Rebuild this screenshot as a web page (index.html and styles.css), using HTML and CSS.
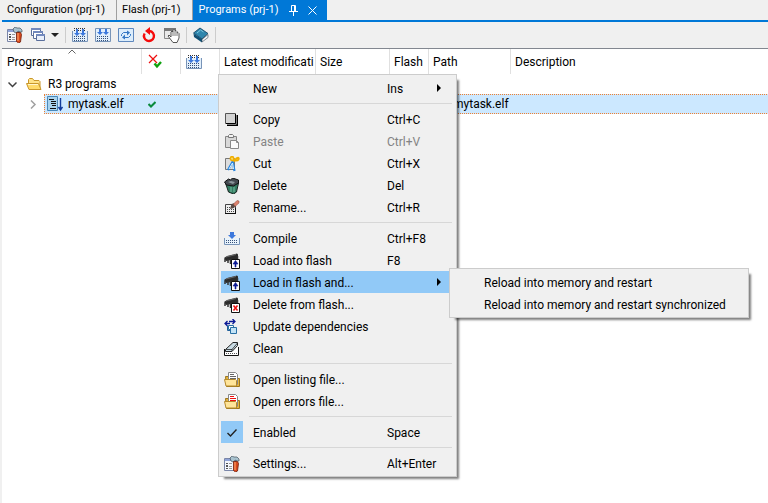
FILE: index.html
```html
<!DOCTYPE html>
<html lang="en">
<head>
  <meta charset="UTF-8" />
  <meta name="viewport" content="width=device-width, initial-scale=1.0"/>
  <title>Programs (prj-1)</title>
  <link rel="stylesheet" href="styles.css">
</head>
<body>

<!-- icon set -->
<svg class="defs" aria-hidden="true">
  <symbol id="i-settings" viewBox="0 0 16 16">
    <path d="M.5 2.500h11v12H.5z" fill="#f4f6fb" stroke="#7a86a8"/>
    <path d="M1 3h10v2H1z" fill="#8fa3d8"/>
    <path d="M2 7h2v1H2zM2 9h2v2H2zM2 12h2v1H2z" fill="#555"/>
    <path d="M5 7h3v1H5zM5 10h3v1H5zM5 12h3v1H5z" fill="#999"/>
    <path d="M6 2l2-2 2 1h3l2 2v2h-2l-1-1-2 1-1 1-2-1z" fill="#a9c3cf" stroke="#44505c" stroke-width=".7"/>
    <path d="M9.500 5.500h4l1 2-1 7.500-2 1-2-1.500z" fill="#d8481c" stroke="#6e1c08" stroke-width=".8"/>
    <path d="M11 6v8" stroke="#ffab70"/>
  </symbol>
  <symbol id="i-windows" viewBox="0 0 16 16">
    <path d="M1.500 1.500h9v7h-9z" fill="#fff" stroke="#5a6f9c"/><path d="M1 1h10v2H1z" fill="#7289bd"/>
    <path d="M3.500 4.500h9v7h-9z" fill="#fff" stroke="#5a6f9c"/><path d="M3 4h10v2H3z" fill="#7289bd"/>
    <path d="M6.500 7.500h8v6h-8z" fill="#e9effa" stroke="#5a6f9c"/><path d="M6 7h9v2H6z" fill="#7289bd"/>
  </symbol>
  <symbol id="i-build" viewBox="0 0 16 16">
    <path d="M.5 4v10.500h15V4" fill="#e2effb" stroke="#7894b8"/>
    <path d="M2 1.500h12M2 3.500h12" stroke="#333" stroke-dasharray="1 1"/>
    <path d="M4 2h2v4h2L5 9 2 6h2zM10 2h2v4h2l-3 3-3-3h2z" fill="#3c78dc"/>
    <path d="M2 9.500h12M2 11.500h12M2 13.500h12" stroke="#35507a" stroke-dasharray="1 1"/>
  </symbol>
  <symbol id="i-build-one" viewBox="0 0 16 16">
    <path d="M.5 1.500h15v13H.5z" fill="#e2effb" stroke="#7894b8"/>
    <path d="M4 2h2v3h2L5 8 2 5h2zM10 2h2v3h2l-3 3-3-3h2z" fill="#3c78dc"/>
    <path d="M2 9.500h12M2 11.500h12M2 13.500h12" stroke="#35507a" stroke-dasharray="1 1"/>
  </symbol>
  <symbol id="i-sync" viewBox="0 0 16 16">
    <path d="M.5 1.500h15v13H.5z" fill="#dcedfb" stroke="#5f88bd"/>
    <path d="M3.500 9V7.500l2-2H10M12.500 7v1.500l-2 2H6" fill="none" stroke="#3377c4"/>
    <path d="M9 3.500l3 2-3 3zM7 7.500l-3 3 3 2z" fill="#3377c4"/>
  </symbol>
  <symbol id="i-restart" viewBox="0 0 16 16">
    <path d="M3.600 6.500A5 5 0 1 0 8.500 4" fill="none" stroke="#f50a0a" stroke-width="2.400"/>
    <path d="M4 4l5-4v8z" fill="#f50a0a"/>
  </symbol>
  <symbol id="i-hand" viewBox="0 0 16 16">
    <path d="M.5 1.500h11v10H.5z" fill="#e9e9e9" stroke="#888"/><path d="M0 1h12v3H0z" fill="#777"/>
    <path d="M4 9l1-1 2 2V5l1-1 1 1V3.500l1-1 1 1V4l1-.5 1 1V6l1-.5 1 1V11l-2 4.500H9z" fill="#fff" stroke="#444" stroke-width=".9"/>
    <path d="M9 5v4M11 4v5M13 6v3" stroke="#555" stroke-width=".8"/>
  </symbol>
  <symbol id="i-book" viewBox="0 0 16 16">
    <path d="M.5 6L7 1l8 5.500L9 12z" fill="#2f86ad" stroke="#0b3c5c" stroke-width=".8"/>
    <path d="M.5 6.500L9 12v3.500L1 10z" fill="#0f4f74"/>
    <path d="M9 12.500L15 7.500v3L9 15z" fill="#f3f6f8" stroke="#345" stroke-width=".6"/>
    <path d="M4 6l3.500-3 3 2" fill="none" stroke="#7cc7de"/>
  </symbol>
  <symbol id="i-status" viewBox="0 0 16 16">
    <path d="M2 1l8 8M10 1l-8 8" stroke="#ee1010" stroke-width="1.200"/>
    <path d="M7.500 9.500l2.500 3 4-4.500" fill="none" stroke="#0fa10f" stroke-width="2.400"/>
  </symbol>
  <symbol id="i-folder" viewBox="0 0 16 16">
    <path d="M2.500 11V3.500l1-1h3l1.500 2h5l1 1V12" fill="#ffe48a" stroke="#c9972c"/>
    <path d="M.5 7.500h12l2.500 6H3z" fill="#ffdb6b" stroke="#c9972c"/>
    <path d="M2 8.500h10" stroke="#fff6cf"/>
  </symbol>
  <symbol id="i-task" viewBox="0 0 16 16">
    <path d="M.5 .5h10v14H.5z" fill="#a9d3ee" stroke="#4b88b8"/>
    <path d="M2 3.500h5M4 5.500h5M4 7.500h5M5 9.500h4M3 12.500h6" stroke="#111"/>
    <path d="M13.500 2v11M11.500 11l2 3 2-3" fill="none" stroke="#123c9c" stroke-width="1.400"/>
  </symbol>
  <symbol id="i-copy" viewBox="0 0 16 16">
    <path d="M3 3h11v11H3z" fill="#000"/><path d="M2 2h10.500v10.500H2z" fill="#fff"/>
    <path d="M1.500 1.500h10v10h-10z" fill="#d4d4d4" stroke="#555"/>
    <path d="M2 11.500h9.500V2" fill="none" stroke="#000"/>
  </symbol>
  <symbol id="i-paste" viewBox="0 0 16 16">
    <path d="M1.500 2.500h11v11h-11z" fill="#d8d8d8" stroke="#858585"/>
    <path d="M4.500 3.500v-2l1-1h3l1 1v2z" fill="#f3f3f3" stroke="#777"/>
    <path d="M6.500 6.500h6l2 2v6h-8z" fill="#fafafa" stroke="#888"/><path d="M12.500 6.500v2h2" fill="none" stroke="#888"/>
  </symbol>
  <symbol id="i-cut" viewBox="0 0 16 16">
    <path d="M1.500 2.500h9v11h-9z" fill="#ddd" stroke="#777"/>
    <path d="M9 5l-5 9M8.500 5l2 10" stroke="#2684df" stroke-width="2.200"/><path d="M8.500 7L5 13M8.500 7l1 6" stroke="#d8f0ff"/>
    <path d="M6.500 2.500c0-2.500 3-2.500 3 0l1 2c3-4 5-3 4-1s-3 1-5 1-3 0-3-2z" fill="#fff1a8" stroke="#f0ae00" stroke-width="1.800"/>
  </symbol>
  <symbol id="i-delete" viewBox="0 0 16 16">
    <path d="M1.500 5l3 9 5 2 3-2 2-9z" fill="#347c62" stroke="#17231f"/>
    <path d="M.5 4l4-3 2 1 2-2 6 2v3l-5 3-7-1z" fill="#444a50" stroke="#111"/>
    <path d="M4 4l3-1 4 1-2 2z" fill="#8d979c"/>
    <path d="M7 9v5M10 9v5" stroke="#73bfa0"/>
  </symbol>
  <symbol id="i-rename" viewBox="0 0 16 16">
    <path d="M1.500 4.500h10v9h-10z" fill="#eee" stroke="#444"/><path d="M1 13h11v1H1zM11 8h1v6h-1z" fill="#111"/>
    <path d="M3 7.500h5M3 9.500h7M3 11.500h7" stroke="#444" stroke-dasharray="1 1"/>
    <path d="M6 9l1.500-5 3-1 1.500 2-2 3z" fill="#5a4b45"/>
    <path d="M9.500 4l3.500-3.500 2 .5v2l-4 3.500z" fill="#dc826d" stroke="#8d493c" stroke-width=".5"/>
  </symbol>
  <symbol id="i-compile" viewBox="0 0 16 16">
    <path d="M.5 7v6.500h15V7" fill="#e8f3fc" stroke="#7894b8"/>
    <path d="M6 1h4v3h2L8 8 4 4h2z" fill="#3c78dc"/>
    <path d="M2 9.500h12M2 11.500h12" stroke="#35507a" stroke-dasharray="1 1"/>
  </symbol>
  <symbol id="i-chip" viewBox="0 0 16 16">
    <path d="M0 5l3-2 10-2.500 1 1V6L7 7 2 8z" fill="#2b2b2b"/>
    <path d="M1 6v3M4 6v4M6.500 6v5M13.500 3v4" stroke="#333" stroke-width="1.500"/>
    <path d="M2 4l4-1 6-1.500" fill="none" stroke="#777" stroke-width=".8"/>
  </symbol>
  <symbol id="i-load" viewBox="0 0 16 16">
    <use href="#i-chip"/>
    <path d="M7.500 6.500h8v9h-8z" fill="#fff" stroke="#111"/>
    <path d="M11 14v-3H9l2.500-3.500 2.500 3.500h-2v3z" fill="#0c1a96" stroke="#0c1a96" stroke-width=".6"/>
  </symbol>
  <symbol id="i-unload" viewBox="0 0 16 16">
    <use href="#i-chip"/>
    <path d="M7.500 6.500h8v9h-8z" fill="#fff" stroke="#111"/>
    <path d="M9.500 8.500l4 5M13.500 8.500l-4 5" stroke="#ed1010" stroke-width="1.500"/>
  </symbol>
  <symbol id="i-update" viewBox="0 0 16 16">
    <path d="M1 4.500h5M3.500 2L1 4.500 3.500 7M5 2.500h6M8.500 0L11 2.500 8.500 5" fill="none" stroke="#0c1a96" stroke-width="1.300"/>
    <path d="M3.500 7v4.500H6" fill="none" stroke="#20609a"/>
    <path d="M4.500 6.500h5v4h-5z" fill="#fff" stroke="#286fa4"/>
    <path d="M6.500 8.500h6v6h-6z" fill="#c3e3f6" stroke="#286fa4"/>
  </symbol>
  <symbol id="i-clean" viewBox="0 0 16 16">
    <path d="M.5 8v6.500h14V6" fill="#fff" stroke="#111"/>
    <path d="M2 12.500h12" stroke="#555" stroke-dasharray="1 1"/>
    <path d="M1.500 8.500l7.500-7h4.500v3L8 10.500H1.500z" fill="#c9dbe4" stroke="#222"/>
    <path d="M2 8.500h6l5.500-6.500M8 8v2" fill="none" stroke="#222" stroke-width=".8"/>
  </symbol>
  <symbol id="i-open" viewBox="0 0 16 16">
    <path d="M1.500 4.500h4l1 2h9v8h-13z" fill="#e8b63d" stroke="#9b761f"/>
    <path d="M4.500 .5h7l2 2v10h-9z" fill="#fff" stroke="#888"/>
    <path d="M6 2.500h4M6 4.500h6M6 6.500h6" stroke="currentColor"/>
    <path d="M.5 7.500h11l1 1v5.500H2z" fill="#ffe59a" stroke="#b68a2c"/>
  </symbol>
</svg>

<nav class="tabs">
  <a class="tab" href="#">Configuration (prj-1)</a>
  <a class="tab" href="#">Flash (prj-1)</a>
  <div class="tab active">
    <a href="#">Programs (prj-1)</a>
    <button aria-label="Pin"><svg width="9" height="12" viewBox="0 0 9 12"><path d="M2.500 7V1.500h4V7M5.500 2v5M0 7.500h9M4.500 8v4" fill="none" stroke="#fff"/></svg></button>
    <button aria-label="Close"><svg width="9" height="9" viewBox="0 0 9 9"><path d="M.5 .5l8 8M8.500 .5l-8 8" stroke="#fff"/></svg></button>
  </div>
</nav>

<div class="toolbar">
  <button aria-label="Settings"><svg class="icon"><use href="#i-settings"/></svg></button>
  <button aria-label="Windows"><svg class="icon"><use href="#i-windows"/></svg></button>
  <button class="drop" aria-label="More windows"></button>
  <span class="divider"></span>
  <button aria-label="Build all"><svg class="icon"><use href="#i-build"/></svg></button>
  <button aria-label="Build"><svg class="icon"><use href="#i-build-one"/></svg></button>
  <button aria-label="Synchronize"><svg class="icon"><use href="#i-sync"/></svg></button>
  <button aria-label="Restart"><svg class="icon"><use href="#i-restart"/></svg></button>
  <button aria-label="Stop"><svg class="icon"><use href="#i-hand"/></svg></button>
  <span class="divider"></span>
  <button aria-label="Help"><svg class="icon"><use href="#i-book"/></svg></button>
  <span class="divider"></span>
</div>

<main class="panel">
  <table class="programs">
    <colgroup>
      <col class="c-program"><col class="c-icon"><col class="c-icon"><col class="c-date">
      <col class="c-size"><col class="c-icon"><col class="c-path"><col>
    </colgroup>
    <thead>
      <tr>
        <th class="sorted">Program<svg class="sort" width="8" height="5" viewBox="0 0 8 5"><path d="M.5 4.500L4 1l3.500 3.500" fill="none" stroke="#666"/></svg></th>
        <th class="has-icon"><svg class="icon"><use href="#i-status"/></svg></th>
        <th class="has-icon"><svg class="icon"><use href="#i-build"/></svg></th>
        <th>Latest modificati</th>
        <th>Size</th>
        <th>Flash</th>
        <th>Path</th>
        <th>Description</th>
      </tr>
    </thead>
    <tbody>
      <tr>
        <td colspan="8">
          <div class="node">
            <svg class="arrow" viewBox="0 0 9 9"><path d="M.5 2.500l4 4 4-4" fill="none" stroke="#404040" stroke-width="1.500"/></svg>
            <svg class="icon"><use href="#i-folder"/></svg>
            <span>R3 programs</span>
          </div>
        </td>
      </tr>
      <tr class="selected">
        <td>
          <div class="node child">
            <svg class="arrow" viewBox="0 0 9 9"><path d="M3 .5l4 4-4 4" fill="none" stroke="#a0a0a0" stroke-width="1.500"/></svg>
            <span class="label"><svg class="icon"><use href="#i-task"/></svg>mytask.elf</span>
          </div>
        </td>
        <td class="has-icon"><svg width="8" height="7" viewBox="0 0 8 7"><path d="M.5 3l2.500 2.500L7.500 1" fill="none" stroke="#0b8a3c" stroke-width="2"/></svg></td>
        <td></td>
        <td></td>
        <td></td>
        <td></td>
        <td class="path">mytask.elf</td>
        <td></td>
      </tr>
    </tbody>
  </table>
</main>

<ul class="menu context">
  <li><button><span class="mark"></span><span>New</span><kbd>Ins</kbd><i class="more"></i></button></li>
  <li class="line"></li>
  <li><button><span class="mark"><svg class="icon"><use href="#i-copy"/></svg></span><span>Copy</span><kbd>Ctrl+C</kbd></button></li>
  <li><button disabled><span class="mark"><svg class="icon"><use href="#i-paste"/></svg></span><span>Paste</span><kbd>Ctrl+V</kbd></button></li>
  <li><button><span class="mark"><svg class="icon"><use href="#i-cut"/></svg></span><span>Cut</span><kbd>Ctrl+X</kbd></button></li>
  <li><button><span class="mark"><svg class="icon"><use href="#i-delete"/></svg></span><span>Delete</span><kbd>Del</kbd></button></li>
  <li><button><span class="mark"><svg class="icon"><use href="#i-rename"/></svg></span><span>Rename...</span><kbd>Ctrl+R</kbd></button></li>
  <li class="line"></li>
  <li><button><span class="mark"><svg class="icon"><use href="#i-compile"/></svg></span><span>Compile</span><kbd>Ctrl+F8</kbd></button></li>
  <li><button><span class="mark"><svg class="icon"><use href="#i-load"/></svg></span><span>Load into flash</span><kbd>F8</kbd></button></li>
  <li class="open">
    <button><span class="mark"><svg class="icon"><use href="#i-load"/></svg></span><span>Load in flash and...</span><kbd></kbd><i class="more"></i></button>
    <ul class="menu submenu">
      <li><button><span class="mark"></span><span>Reload into memory and restart</span></button></li>
      <li><button><span class="mark"></span><span>Reload into memory and restart synchronized</span></button></li>
    </ul>
  </li>
  <li><button><span class="mark"><svg class="icon"><use href="#i-unload"/></svg></span><span>Delete from flash...</span></button></li>
  <li><button><span class="mark"><svg class="icon"><use href="#i-update"/></svg></span><span>Update dependencies</span></button></li>
  <li><button><span class="mark"><svg class="icon"><use href="#i-clean"/></svg></span><span>Clean</span></button></li>
  <li class="line"></li>
  <li><button><span class="mark"><svg class="icon"><use href="#i-open"/></svg></span><span>Open listing file...</span></button></li>
  <li><button><span class="mark errors"><svg class="icon"><use href="#i-open"/></svg></span><span>Open errors file...</span></button></li>
  <li class="line"></li>
  <li><button><span class="mark checked"><svg width="10" height="8" viewBox="0 0 10 8"><path d="M.5 4L3.500 7l6-6.500" fill="none" stroke="#222" stroke-width="1.400"/></svg></span><span>Enabled</span><kbd>Space</kbd></button></li>
  <li class="line"></li>
  <li><button><span class="mark"><svg class="icon"><use href="#i-settings"/></svg></span><span>Settings...</span><kbd>Alt+Enter</kbd></button></li>
</ul>

</body>
</html>
```
FILE: styles.css
```css
* {
  box-sizing: border-box;
}

body {
  margin: 0;
  padding-left: 2px;
  min-height: 100vh;
  display: flex;
  flex-direction: column;
  background-color: #f0f0f0;
  color: #000;
  font-family: Roboto, "Noto Sans", sans-serif;
  font-size: 12px;
  line-height: 16px;
}

button {
  padding: 0;
  border: none;
  background: none;
  color: inherit;
  font: inherit;
}

svg {
  display: block;
  flex: none;
}

.defs {
  position: absolute;
  width: 0;
  height: 0;
}

.icon {
  width: 16px;
  height: 16px;
}

/* tabs */
.tabs {
  display: flex;
  height: 22px;
  border-bottom: 2px solid #0078d7;
  font-size: 11px;
}

.tab {
  display: flex;
  align-items: center;
  padding: 0 11px 0 5px;
  border-right: 1px solid #a0a0a0;
  color: #000;
  text-decoration: none;
  white-space: nowrap;
}

.tab.active {
  gap: 10px;
  padding: 0 10px 0 6px;
  border: none;
  background-color: #0078d7;
  color: #fff;
}

.tab.active a {
  color: inherit;
  text-decoration: none;
}

/* toolbar */
.toolbar {
  display: flex;
  align-items: center;
  gap: 7px;
  height: 26px;
  padding-left: 5px;
}

.drop {
  margin-left: -2px;
  border: 4px solid transparent;
  border-top-color: #222;
  border-bottom: none;
}

.divider {
  width: 1px;
  height: 16px;
  margin: 0 -1px;
  background-color: #ccc;
}

/* program list */
.panel {
  flex: 1;
  border-top: 1px solid #828790;
  background-color: #fff;
}

.programs {
  width: 100%;
  table-layout: fixed;
  border-collapse: separate;
  border-spacing: 0;
}

.c-program {
  width: 140px;
}

.c-icon {
  width: 39px;
}

.c-date {
  width: 96px;
}

.c-size {
  width: 74px;
}

.c-path {
  width: 82px;
}

th {
  height: 25px;
  padding: 0 0 0 4px;
  border-right: 1px solid #e0e0e0;
  font-weight: normal;
  text-align: left;
  white-space: nowrap;
}

th:last-child {
  border-right: none;
}

.sorted {
  position: relative;
  padding-left: 5px;
}

.sort {
  position: absolute;
  top: 0;
  left: 66px;
}

td {
  height: 20px;
  padding: 0;
}

.node {
  display: flex;
  align-items: center;
  height: 20px;
  padding-left: 6px;
}

.node .icon {
  margin: 0 6px 0 9px;
}

.arrow {
  width: 9px;
  height: 9px;
}

.child {
  padding-left: 26px;
}

.label {
  flex: 1;
  display: flex;
  align-items: center;
  height: 20px;
  margin-left: 7px;
  border-left: 1px dotted #f08030;
}

.label .icon {
  margin: 0 5px 0 2px;
}

/* dotted focus frame above and below the row */
.label,
.selected td + td {
  background-color: #cce8ff;
  background-image: linear-gradient(to right, #f08030 1px, transparent 1px), linear-gradient(to right, #f08030 1px, transparent 1px);
  background-position: 1px 0, 1px 100%;
  background-repeat: repeat-x;
  background-size: 2px 1px;
}

.selected td.has-icon {
  padding-left: 6px;
  background-position: 0 0, 0 100%;
}

.has-icon {
  padding-left: 5px;
}

.path {
  padding-left: 24px;
}

/* menus */
.menu {
  position: absolute;
  margin: 0;
  padding: 2px;
  border: 1px solid #ccc;
  background-color: #f0f0f0;
  box-shadow: 4px 4px 2px -2px rgba(0, 0, 0, 0.5);
  list-style: none;
}

.context {
  top: 74px;
  left: 218px;
  width: 239px;
}

.submenu {
  top: -3px;
  left: 228px;
  width: 300px;
}

.menu li {
  position: relative;
}

.menu button {
  display: flex;
  align-items: center;
  width: 100%;
  height: 22px;
  text-align: left;
  white-space: nowrap;
}

.menu button:disabled {
  color: #838383;
}

.menu span,
.menu kbd {
  padding-top: 2px;
}

.open > button {
  background-color: #91c9f7;
}

.mark {
  display: flex;
  flex: none;
  align-items: center;
  justify-content: center;
  width: 22px;
  height: 22px;
  margin-right: 10px;
  color: #666;
}

.errors {
  color: #ee1010;
}

.checked {
  background-color: #91c9f7;
}

.menu kbd {
  width: 50px;
  margin-left: auto;
  margin-right: 17px;
  font: inherit;
}

.more {
  margin-left: -17px;
  margin-right: 13px;
  border: 4px solid transparent;
  border-left-color: #000;
  border-right: none;
}

.menu .line {
  height: 9px;
  padding: 4px 2px 4px 28px;
}

.line::before {
  content: "";
  display: block;
  height: 1px;
  background-color: #d7d7d7;
}
```
